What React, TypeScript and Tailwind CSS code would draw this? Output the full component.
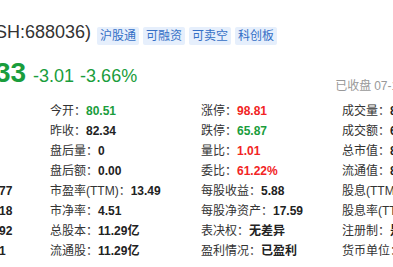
import React from "react";

const tags = ["沪股通", "可融资", "可卖空", "科创板"];

type Cell = { label: string; value: string; color?: string };

const leftEdge = ["", "", "", "", "77", "18", "92", "1"];

const columns: Cell[][] = [
  [
    { label: "今开：", value: "80.51", color: "text-[#1a9d3c]" },
    { label: "昨收：", value: "82.34" },
    { label: "盘后量：", value: "0" },
    { label: "盘后额：", value: "0.00" },
    { label: "市盈率(TTM)：", value: "13.49" },
    { label: "市净率：", value: "4.51" },
    { label: "总股本：", value: "11.29亿" },
    { label: "流通股：", value: "11.29亿" },
  ],
  [
    { label: "涨停：", value: "98.81", color: "text-[#f22424]" },
    { label: "跌停：", value: "65.87", color: "text-[#1a9d3c]" },
    { label: "量比：", value: "1.01", color: "text-[#f22424]" },
    { label: "委比：", value: "61.22%", color: "text-[#f22424]" },
    { label: "每股收益：", value: "5.88" },
    { label: "每股净资产：", value: "17.59" },
    { label: "表决权：", value: "无差异" },
    { label: "盈利情况：", value: "已盈利" },
  ],
  [
    { label: "成交量：", value: "8.69万手" },
    { label: "成交额：", value: "6.87亿" },
    { label: "总市值：", value: "895.47亿" },
    { label: "流通值：", value: "895.47亿" },
    { label: "股息(TTM)：", value: "0.90" },
    { label: "股息率(TTM)：", value: "1.13%" },
    { label: "注册制：", value: "是" },
    { label: "货币单位：", value: "CNY" },
  ],
];

const widths = ["w-[151px]", "w-[141px]", "w-[200px]"];

export default function App() {
  return (
    <div className="w-[393px] h-[267px] overflow-hidden bg-white font-['Liberation_Sans','Noto_Sans_CJK_SC',sans-serif] text-[#333] whitespace-nowrap">
      {/* title + tags */}
      <div className="flex items-start">
        <span className="shrink-0 -ml-[83px] mt-[23px] text-[18px] leading-[18px] text-[#333]">
          传音控股(SH:688036)
        </span>
        <div className="flex shrink-0 gap-[4px] ml-[6px] mt-[27px]">
          {tags.map((t) => (
            <span
              key={t}
              className="h-[18px] px-[3px] leading-[18px] text-[12px] bg-[#e6effc] text-[#3570c6] rounded-[2px]"
            >
              {t}
            </span>
          ))}
        </div>
      </div>

      {/* price row */}
      <div className="flex items-end mt-[14px]">
        <div className="flex items-baseline shrink-0 text-[#1a9d3c]">
          <span className="-ml-[44px] text-[28px] leading-[28px] font-bold">79.33</span>
          <span className="ml-[7px] text-[18px] leading-[18px]">-3.01</span>
          <span className="ml-[6px] text-[18px] leading-[18px]">-3.66%</span>
        </div>
        <span className="shrink-0 ml-[198px] -mb-[5px] text-[12px] leading-[12px] text-[#999]">
          已收盘<span className="ml-[3px]">07-14 15:00:00 北京时间</span>
        </span>
      </div>

      {/* data grid */}
      <div className="flex mt-[14px] text-[12px] leading-[20px]">
        <div className="w-[50px] shrink-0 flex flex-col">
          {leftEdge.map((v, i) => (
            <span key={i} className="h-[20px] -ml-[1px] font-bold text-[#222]">
              {v}
            </span>
          ))}
        </div>
        {columns.map((col, ci) => (
          <div key={ci} className={`${widths[ci]} shrink-0 flex flex-col`}>
            {col.map((c) => (
              <div key={c.label} className="h-[20px] flex">
                <span className="text-[#333]">{c.label}</span>
                <span className={`font-bold ${c.color ?? "text-[#222]"}`}>{c.value}</span>
              </div>
            ))}
          </div>
        ))}
      </div>
    </div>
  );
}
